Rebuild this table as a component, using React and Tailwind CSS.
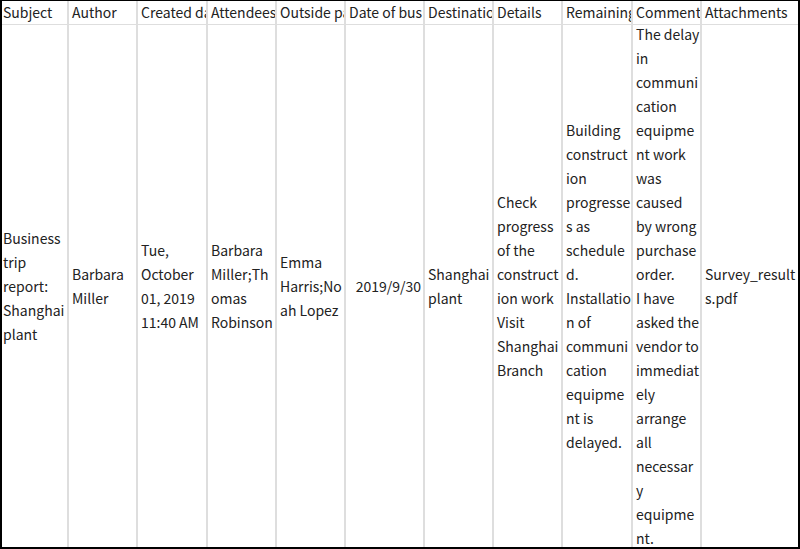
import React from "react";

const columns = [
  { title: "Subject", w: "w-[67px]", lines: ["Business", "trip", "report:", "Shanghai", "plant"], first: true },
  { title: "Author", w: "w-[69px]", lines: ["Barbara", "Miller"] },
  { title: "Created date", w: "w-[70px]", lines: ["Tue,", "October", "01, 2019", "11:40 AM"] },
  { title: "Attendees", w: "w-[69px]", lines: ["Barbara", "Miller;Th", "omas", "Robinson"] },
  { title: "Outside participants", w: "w-[69px]", lines: ["Emma", "Harris;No", "ah Lopez"] },
  { title: "Date of business trip", w: "w-[79px]", lines: ["2019/9/30"], right: true },
  { title: "Destination", w: "w-[69px]", lines: ["Shanghai", "plant"] },
  {
    title: "Details",
    w: "w-[69px]",
    lines: ["Check", "progress", "of the", "construct", "ion work", "Visit", "Shanghai", "Branch"],
  },
  {
    title: "Remaining issues",
    w: "w-[70px]",
    lines: [
      "Building",
      "construct",
      "ion",
      "progresse",
      "s as",
      "schedule",
      "d.",
      "Installatio",
      "n of",
      "communi",
      "cation",
      "equipme",
      "nt is",
      "delayed.",
    ],
  },
  {
    title: "Comment",
    w: "w-[69px]",
    lines: [
      "The delay",
      "in",
      "communi",
      "cation",
      "equipme",
      "nt work",
      "was",
      "caused",
      "by wrong",
      "purchase",
      "order.",
      "I have",
      "asked the",
      "vendor to",
      "immediat",
      "ely",
      "arrange",
      "all",
      "necessar",
      "y",
      "equipme",
      "nt.",
    ],
  },
  { title: "Attachments", w: "flex-1", lines: ["Survey_result", "s.pdf"], last: true },
];

export default function App() {
  return (
    <div
      className="w-[800px] h-[549px] bg-white overflow-hidden text-[14px] leading-[24px] text-[#222222]"
      style={{ fontFamily: '"Noto Sans CJK JP", "Noto Sans", sans-serif' }}
    >
      <div className="h-full border-t border-b-2 border-l-2 border-r-2 border-black flex">
        {columns.map((col) => (
          <div
            key={col.title}
            className={`${col.w} shrink-0 flex flex-col ${col.last ? "" : "border-r-2 border-[#dedede]"}`}
          >
            {/* Header */}
            <div
              className={`h-[24px] shrink-0 border-b border-[#dedede] overflow-hidden whitespace-nowrap leading-[23px] ${
                col.first ? "pl-[1px]" : "pl-[3px]"
              }`}
            >
              {col.title}
            </div>

            {/* Body */}
            <div className="flex-1 min-h-0 overflow-hidden flex items-center">
              <div
                className={`w-full whitespace-nowrap ${col.first ? "pl-[1px]" : "pl-[3px]"} ${
                  col.right ? "text-right pr-[2px]" : ""
                }`}
              >
                {col.lines.map((line, i) => (
                  <div key={i}>{line}</div>
                ))}
              </div>
            </div>
          </div>
        ))}
      </div>
    </div>
  );
}
